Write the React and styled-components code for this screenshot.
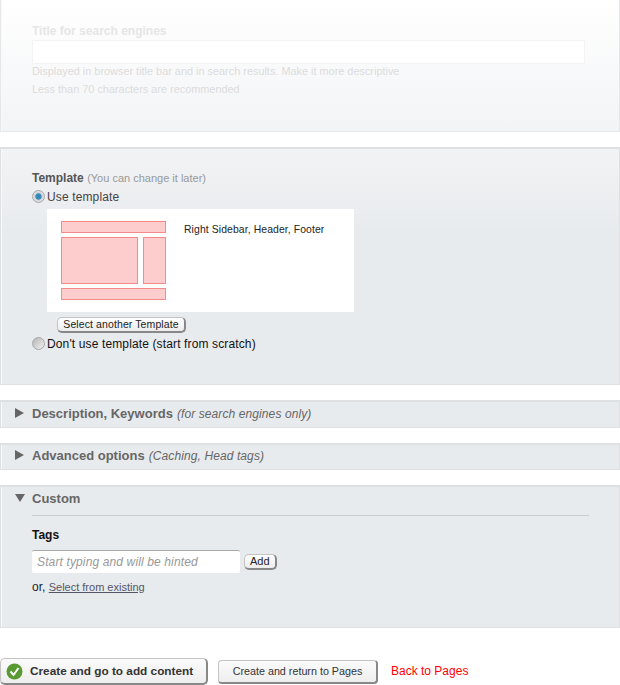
import React from 'react'
import styled, { createGlobalStyle } from 'styled-components'

const GlobalStyle = createGlobalStyle`
  html, body {
    margin: 0;
    padding: 0;
    background: #fff;
  }
  body {
    font-family: "Liberation Sans", Arial, sans-serif;
    font-size: 12px;
    color: #333;
  }
`

const Page = styled.div`
  width: 620px;
  height: 685px;
  overflow: hidden;
  display: flex;
  flex-direction: column;
`

const Panel = styled.section`
  box-sizing: border-box;
  height: ${p => p.$height}px;
  margin-bottom: ${p => p.$gap || 0}px;
  background: #e8ebee;
  border: 1px solid #dee0e2;
  border-top-width: 2px;
  box-shadow: inset 1px 0 0 #f8f9f9;
`

const FadedPanel = styled(Panel)`
  border-top: 0;
  background: linear-gradient(#fff 0, #f3f4f6 100%);
  border-color: #e6e7e9;
  padding: 24px 31px 0;
`

const FadedTitle = styled.div`
  font-size: 12px;
  font-weight: bold;
  line-height: 15px;
  color: #e6e6e6;
`

const FadedInput = styled.div`
  box-sizing: border-box;
  height: 24px;
  margin: 1px 0 0;
  width: 553px;
  background: #fff;
  border: 1px solid #f3f3f3;
`

const FadedHint = styled.div`
  font-size: 10.9px;
  line-height: 14px;
  padding-bottom: 4px;
  color: #dcdcdc;
`

const TemplatePanel = styled(Panel)`
  background: linear-gradient(#f2f3f5 0, #e8ebee 35%);
  padding: 22px 31px 0;
`

const TemplateHeading = styled.div`
  line-height: 15px;
  font-weight: bold;
  color: #555;
  font-size: 12px;
`

const Muted = styled.span`
  font-weight: normal;
  font-size: 11px;
  color: #999;
`

const RadioRow = styled.label`
  display: flex;
  align-items: center;
  height: 17px;
  margin-top: ${p => p.$dark ? 0 : 2}px;
  gap: 2px;
  font-size: 12px;
  letter-spacing: 0.13px;
  color: ${p => p.$dark ? '#111' : '#444'};
`

const Radio = styled.span`
  box-sizing: border-box;
  width: 13px;
  height: 13px;
  border-radius: 50%;
  flex: none;
  border: 1px solid #a8a8a8;
  background: ${p => p.$checked
    ? 'radial-gradient(circle, #2f7fb5 0, #3f8fc0 36%, #cfd2d5 46%, #f4f4f4 100%)'
    : 'linear-gradient(135deg, #b5b5b5, #f2f2f2)'};
`

const TemplateCard = styled.div`
  display: flex;
  gap: 18px;
  width: 307px;
  height: 103px;
  margin: 4px 0 5px 15px;
  padding: 12px 14px;
  box-sizing: border-box;
  background: #fff;
`

const Preview = styled.div`
  width: 105px;
  display: grid;
  grid-template-columns: 77px 23px;
  grid-template-rows: 12px 47px 12px;
  gap: 4px 5px;
  flex: none;
`

const PreviewBlock = styled.div`
  box-sizing: border-box;
  background: #fdcdcd;
  border: 1px solid #f58a8a;
  grid-column: ${p => p.$wide ? '1 / span 2' : 'auto'};
`

const CardLabel = styled.div`
  padding-top: 1px;
  font-size: 10.4px;
  line-height: 16px;
  color: #222;
  letter-spacing: 0.1px;
`

const SmallButton = styled.button`
  box-sizing: border-box;
  height: 16px;
  padding: 0 5px 1px;
  font-family: inherit;
  font-size: 11px;
  line-height: 12px;
  color: #222;
  background: linear-gradient(#fff, #ececec);
  border: 1px solid #c4c4c4;
  border-right: 2px solid #888;
  border-bottom: 2px solid #888;
  border-radius: 5px;
`

const AnotherButton = styled(SmallButton)`
  display: block;
  margin: 0 0 2px 25px;
  width: 129px;
  padding: 0 0 1px;
  font-size: 10.5px;
  letter-spacing: 0.1px;
`

const AccordionHead = styled.div`
  display: flex;
  align-items: center;
  height: ${p => p.$height}px;
  padding-left: 14px;
  gap: ${p => p.$gap || 8}px;
  font-size: 13px;
  font-weight: bold;
  color: #666;
`

const Arrow = styled.span`
  width: ${p => p.$open ? 10 : 9}px;
  height: 10px;
  flex: none;
  background: #666;
  clip-path: ${p => p.$open
    ? 'polygon(0 10%, 100% 10%, 50% 90%)'
    : 'polygon(0 0, 100% 50%, 0 100%)'};
`

const Note = styled.span`
  font-size: 12px;
  font-weight: normal;
  font-style: italic;
  margin-left: 4px;
  letter-spacing: 0.1px;
`

const CustomBody = styled.div`
  margin: 6px 30px 0 31px;
  padding-top: 11px;
  border-top: 1px solid #ccc;
`

const TagsLabel = styled.div`
  font-size: 12px;
  font-weight: bold;
  line-height: 16px;
  color: #111;
`

const TagsRow = styled.div`
  display: flex;
  align-items: center;
  gap: 4px;
  margin-top: 7px;
`

const TagsInput = styled.div`
  box-sizing: border-box;
  width: 208px;
  height: 23px;
  padding-left: 5px;
  background: #fff;
  border-top: 1px solid #aaa;
  border-radius: 2px;
  font-size: 12px;
  line-height: 22px;
  font-style: italic;
  letter-spacing: 0.13px;
  color: #999;
`

const OrLine = styled.div`
  margin-top: 7px;
  font-size: 12px;
  line-height: 15px;
  color: #222;
`

const ExistingLink = styled.a`
  font-size: 11px;
  color: #556;
  text-decoration: underline;
`

const Actions = styled.div`
  display: flex;
  align-items: center;
  margin-top: 30px;
  height: 27px;
`

const PrimaryButton = styled.button`
  box-sizing: border-box;
  width: 208px;
  height: 27px;
  display: flex;
  align-items: center;
  gap: 7px;
  padding: 0 0 0 5px;
  font-family: inherit;
  font-size: 11.8px;
  font-weight: bold;
  color: #333;
  background: linear-gradient(#fbfbfb, #eee);
  border: 1px solid #c4c4c4;
  border-right: 2px solid #888;
  border-bottom: 2px solid #888;
  border-radius: 5px;
`

const SecondaryButton = styled.button`
  box-sizing: border-box;
  width: 160px;
  height: 24px;
  margin-left: 10px;
  padding: 0;
  font-family: inherit;
  font-size: 10.75px;
  color: #333;
  background: linear-gradient(#fbfbfb, #eee);
  border: 1px solid #c4c4c4;
  border-right: 2px solid #888;
  border-bottom: 2px solid #888;
  border-radius: 4px;
`

const BackLink = styled.a`
  margin-left: 13px;
  padding-bottom: 2px;
  font-size: 12px;
  color: #f00;
`

function CheckBadge() {
  return (
    <svg width="17" height="17" viewBox="0 0 17 17">
      <circle cx="8.5" cy="8.5" r="8" fill="#5a9a32" />
      <path d="M4.5 8.5 L7.5 12 L12.5 5" fill="none" stroke="#fff" strokeWidth="2" />
    </svg>
  )
}

export default function App() {
  return (
    <Page>
      <GlobalStyle />
      <FadedPanel $height={132} $gap={15}>
        <FadedTitle>Title for search engines</FadedTitle>
        <FadedInput />
        <FadedHint>Displayed in browser title bar and in search results. Make it more descriptive</FadedHint>
        <FadedHint>Less than 70 characters are recommended</FadedHint>
      </FadedPanel>

      <TemplatePanel $height={238} $gap={15}>
        <TemplateHeading>Template <Muted>(You can change it later)</Muted></TemplateHeading>
        <RadioRow><Radio $checked />Use template</RadioRow>
        <TemplateCard>
          <Preview>
            <PreviewBlock $wide />
            <PreviewBlock />
            <PreviewBlock />
            <PreviewBlock $wide />
          </Preview>
          <CardLabel>Right Sidebar, Header, Footer</CardLabel>
        </TemplateCard>
        <AnotherButton>Select another Template</AnotherButton>
        <RadioRow $dark><Radio />Don't use template (start from scratch)</RadioRow>
      </TemplatePanel>

      <Panel $height={28} $gap={15}>
        <AccordionHead $height={22}>
          <Arrow />
          <span>Description, Keywords<Note>(for search engines only)</Note></span>
        </AccordionHead>
      </Panel>

      <Panel $height={27} $gap={15}>
        <AccordionHead $height={20}>
          <Arrow />
          <span>Advanced options<Note>(Caching, Head tags)</Note></span>
        </AccordionHead>
      </Panel>

      <Panel $height={143}>
        <AccordionHead $height={22} $gap={7}><Arrow $open />Custom</AccordionHead>
        <CustomBody>
          <TagsLabel>Tags</TagsLabel>
          <TagsRow>
            <TagsInput>Start typing and will be hinted</TagsInput>
            <SmallButton>Add</SmallButton>
          </TagsRow>
          <OrLine>or, <ExistingLink>Select from existing</ExistingLink></OrLine>
        </CustomBody>
      </Panel>

      <Actions>
        <PrimaryButton><CheckBadge />Create and go to add content</PrimaryButton>
        <SecondaryButton>Create and return to Pages</SecondaryButton>
        <BackLink>Back to Pages</BackLink>
      </Actions>
    </Page>
  )
}
